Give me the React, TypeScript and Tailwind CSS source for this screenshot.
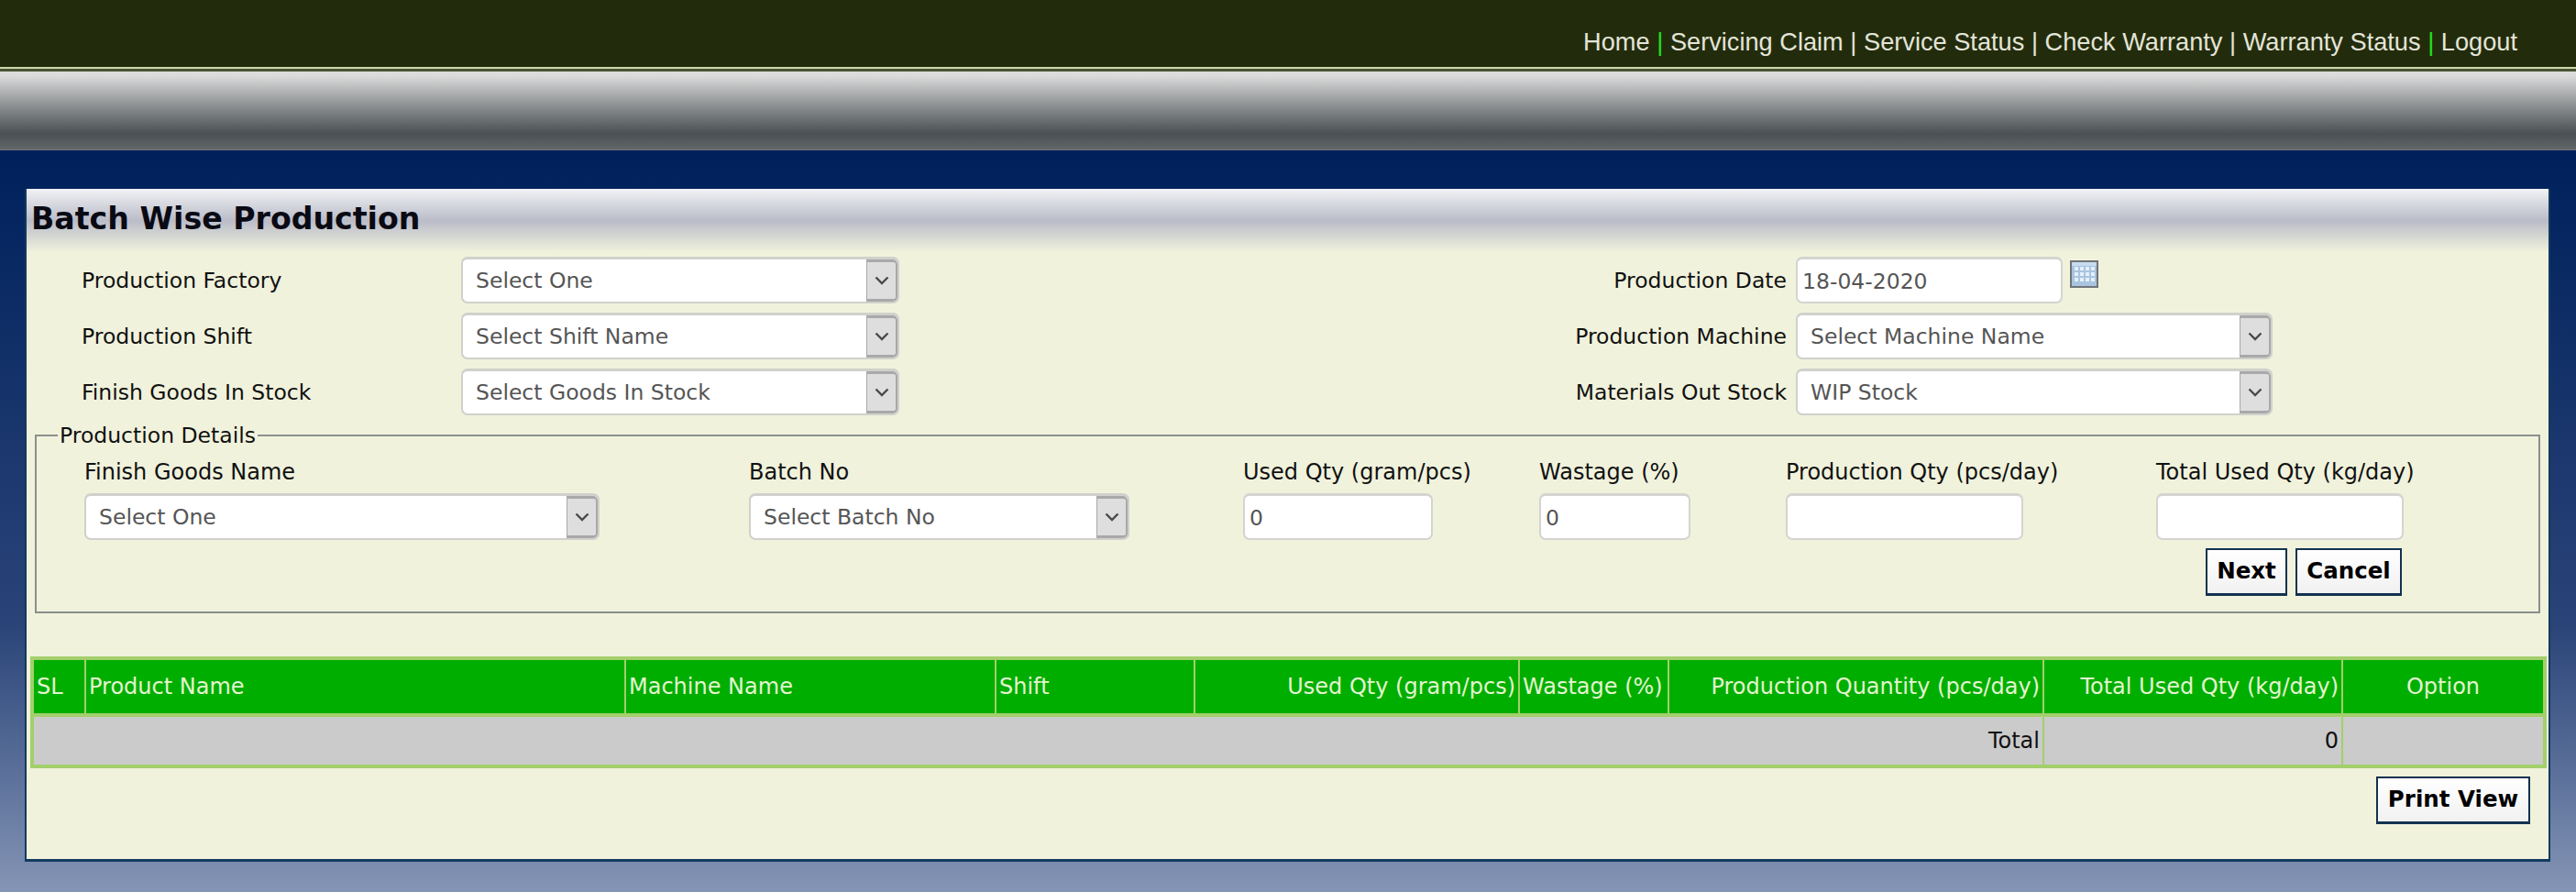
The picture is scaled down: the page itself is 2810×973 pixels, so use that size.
import React from "react";

const Chevron = () => (
  <svg width="16" height="10" viewBox="0 0 16 10" fill="none" stroke="#4a4a4a" strokeWidth="2.4">
    <path d="M1.5 1.5 8 8l6.5-6.5" />
  </svg>
);

function Select({ text, className }: { text: string; className: string }) {
  return (
    <div className={`flex h-[51px] shrink-0 items-stretch rounded-[7px] border-2 border-t-[3px] border-[#d0d0cc] bg-white ${className}`}>
      <span className="flex flex-1 items-center pt-[2px] pl-[14px] text-[23.5px] text-[#555]">{text}</span>
      <span className="flex w-[34px] items-center justify-center rounded-r-[5px] border-y-[3px] border-l border-r-2 border-[#a9a9a9] bg-[#dedede]">
        <Chevron />
      </span>
    </div>
  );
}

const inputClass =
  "h-[51px] rounded-[7px] border-2 border-t-[3px] border-[#d4d4d0] bg-white pt-[2px] pl-[5px] text-[23.5px] text-[#555] outline-none";
const buttonClass =
  "h-[52px] border-2 border-[#12324f] border-b-[3px] bg-gradient-to-b from-white to-[#f1f1f1] text-[24.5px] font-bold text-black";

const CalendarIcon = () => (
  <svg width="31" height="30" viewBox="0 0 31 30" className="mt-[4px] ml-[8px] shrink-0">
    <rect x="1" y="1" width="29" height="28" fill="#a9c4df" stroke="#6f7478" strokeWidth="2" />
    <rect x="2" y="2" width="27" height="4" fill="#c8dcf0" />
    {[7, 13, 19].map((y) =>
      [6, 12, 18, 24].map((x) => <rect key={`${x}-${y}`} x={x - 1} y={y} width="4" height="4" fill="#e4f0fb" />)
    )}
  </svg>
);

const Field = ({ label, children }: { label: string; children: React.ReactNode }) => (
  <div className="flex flex-col">
    <div className="h-[38px] whitespace-nowrap text-[24px] leading-[30px] text-[#111]">{label}</div>
    {children}
  </div>
);

const nav: [string, boolean][] = [
  ["Home", true],
  ["Servicing Claim", false],
  ["Service Status", false],
  ["Check Warranty", false],
  ["Warranty Status", true],
  ["Logout", false],
];

const headers: [string, string][] = [
  ["SL", "text-left"],
  ["Product Name", "text-left"],
  ["Machine Name", "text-left"],
  ["Shift", "text-left"],
  ["Used Qty (gram/pcs)", "text-right"],
  ["Wastage (%)", "text-left"],
  ["Production Quantity (pcs/day)", "text-right"],
  ["Total Used Qty (kg/day)", "text-right"],
  ["Option", "text-center"],
];

const colWidths = [58, 589, 404, 217, 354, 163, 409, 326, 221];

export default function App() {
  return (
    <div className="flex h-[973px] w-[2810px] flex-col overflow-hidden bg-gradient-to-b from-[#00205c] from-[17%] via-[#2a4478] via-[70%] to-[#8595b5] font-['DejaVu_Sans',Verdana,sans-serif] text-[23.5px]">
      <header className="flex h-[73px] shrink-0 items-center justify-end bg-[#222c0c] pt-[20px] pr-[64px] font-['Liberation_Sans',Arial,sans-serif] text-[27.2px] text-[#e4e4d8]">
        {nav.map(([t, green], i) => (
          <React.Fragment key={t}>
            <span>{t}</span>
            {i < nav.length - 1 && <span className={`px-[7.6px] ${green ? "text-[#22e022]" : "text-[#e4e4d8]"}`}>|</span>}
          </React.Fragment>
        ))}
      </header>
      <div className="h-[5px] shrink-0 border-t-2 border-b-[1px] border-t-[#cdd8b0] border-b-[#4c5433] bg-[#4c5433]" />
      <div className="h-[86px] shrink-0 border-b border-[#777] bg-gradient-to-b from-[#dcdcdc] from-[5%] via-[#4a5053] via-[80%] to-[#62676a]" />

      <main className="mt-[42px] ml-[27px] flex h-[734px] w-[2755px] flex-col border-x-2 border-b-[3px] border-x-[#123a5e] border-b-[#123a5e] bg-[#f0f2dc]">
        <h1 className="h-[69px] shrink-0 bg-gradient-to-b from-[#f2f3f5] via-[#babcc8] to-[#f0f2dc] pl-[5px] text-[33.2px] leading-[66px] font-bold text-[#0a0a14]">
          Batch Wise Production
        </h1>

        <section className="flex justify-between pt-[5px] pr-[301px] pl-[60px] text-[#111]">
          <div className="flex flex-col gap-[10px]">
            {[
              ["Production Factory", "Select One"],
              ["Production Shift", "Select Shift Name"],
              ["Finish Goods In Stock", "Select Goods In Stock"],
            ].map(([l, v]) => (
              <div key={l} className="flex items-center">
                <span className="w-[414px] pt-[2px]">{l}</span>
                <Select text={v} className="w-[478px]" />
              </div>
            ))}
          </div>
          <div className="flex flex-col gap-[10px]">
            <div className="flex h-[51px] items-start">
              <span className="mr-[10px] w-[400px] self-center pt-[2px] text-right">Production Date</span>
              <input readOnly value="18-04-2020" className={`${inputClass} w-[291px]`} />
              <CalendarIcon />
            </div>
            {[
              ["Production Machine", "Select Machine Name"],
              ["Materials Out Stock", "WIP Stock"],
            ].map(([l, v]) => (
              <div key={l} className="flex items-center">
                <span className="mr-[10px] w-[400px] pt-[2px] text-right">{l}</span>
                <Select text={v} className="w-[520px]" />
              </div>
            ))}
          </div>
        </section>

        <fieldset className="mt-[8px] ml-[9px] h-[208px] w-[2733px] shrink-0 border-2 border-[#8b8f8c] pl-[52px]">
          <legend className="-ml-[29px] px-[2px] leading-[28px] text-[#111]">Production Details</legend>
          <div className="mt-[11px] grid grid-cols-[725px_539px_323px_269px_404px_270px]">
            <Field label="Finish Goods Name">
              <Select text="Select One" className="w-[562px]" />
            </Field>
            <Field label="Batch No">
              <Select text="Select Batch No" className="w-[415px]" />
            </Field>
            <Field label="Used Qty (gram/pcs)">
              <input readOnly value="0" className={`${inputClass} w-[207px] pl-[3px]`} />
            </Field>
            <Field label="Wastage (%)">
              <input readOnly value="0" className={`${inputClass} w-[165px] pl-[3px]`} />
            </Field>
            <Field label="Production Qty (pcs/day)">
              <input readOnly className={`${inputClass} w-[259px]`} />
            </Field>
            <Field label="Total Used Qty (kg/day)">
              <input readOnly className={`${inputClass} w-[270px]`} />
            </Field>
          </div>
          <div className="mt-[9px] flex justify-end gap-[9px] pr-[149px]">
            <button className={`${buttonClass} w-[89px]`}>Next</button>
            <button className={`${buttonClass} w-[116px]`}>Cancel</button>
          </div>
        </fieldset>

        <table className="mt-[47px] ml-[4px] w-[2741px] table-fixed border-collapse border-[4px] border-[#a3cf6c] text-[24px]">
          <colgroup>
            {colWidths.map((w, i) => (
              <col key={i} style={{ width: w }} />
            ))}
          </colgroup>
          <thead>
            <tr className="h-[62px] border-b-[4px] border-[#a3cf6c] bg-[#00ae00] text-[#e4f5d0]">
              {headers.map(([h, align]) => (
                <th key={h} className={`border-x-2 border-[#a3cf6c] px-[3px] font-normal whitespace-nowrap ${align}`}>
                  {h}
                </th>
              ))}
            </tr>
          </thead>
          <tbody>
            <tr className="h-[56px] bg-[#cbcbcb] text-[#111]">
              <td colSpan={7} className="px-[3px] text-right">Total</td>
              <td className="border-x-2 border-[#a3cf6c] px-[3px] text-right">0</td>
              <td />
            </tr>
          </tbody>
        </table>

        <div className="mt-[9px] flex justify-end pr-[20px]">
          <button className={`${buttonClass} w-[168px]`}>Print View</button>
        </div>
      </main>
    </div>
  );
}
